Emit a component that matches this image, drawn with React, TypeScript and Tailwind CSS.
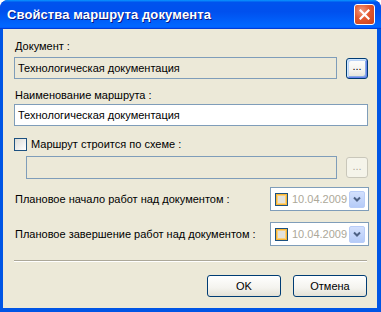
import type { FC } from "react";

const font = "font-['Tahoma','Liberation_Sans',sans-serif]";

const XpButton: FC<{ label: string; className?: string; disabled?: boolean; focused?: boolean }> = ({
	label,
	className,
	disabled,
	focused,
}) => {
	if (disabled) {
		return (
			<div
				className={`flex items-center justify-center rounded-[3px] border border-[#C9C7BA] bg-[#F5F4EA] text-[#ACA899] ${className}`}
			>
				{label}
			</div>
		);
	}
	return (
		<div
			className={`flex items-center justify-center rounded-[3px] border border-[#003C74] bg-[linear-gradient(to_bottom,#FFFFFF_0%,#F4F3EE_60%,#E3E1D6_100%)] text-black ${
				focused ? "shadow-[inset_1px_1px_0_#CEE7FF,inset_-1px_-1px_0_#6982EE,inset_2px_2px_0_#BCD4F6,inset_-2px_-2px_0_#89ADE4]" : ""
			} ${className}`}
		>
			{label}
		</div>
	);
};

const DatePicker: FC = () => (
	<div className="flex h-[24px] w-[99px] items-center border border-[#7F9DB9] bg-white pl-[4px] pr-[3px]">
		<div className="flex h-[13px] w-[13px] items-center justify-center border border-[#1C5180] bg-[#F8B636]">
			<div className="h-[9px] w-[9px] border border-[#FCD07A] bg-[#E3E2DC]" />
		</div>
		<span className="ml-[4px] text-[11px] leading-none text-[#ACA899]">10.04.2009</span>
		<div className="ml-auto flex h-[17px] w-[16px] items-center justify-center rounded-[2px] border border-[#B9CDF8] bg-[linear-gradient(to_bottom,#D3E0FD,#B5CBF8)]">
			<svg width="8" height="6" viewBox="0 0 8 6">
				<path d="M1 1.5 L4 4.5 L7 1.5" stroke="#4D6185" strokeWidth="2" fill="none" />
			</svg>
		</div>
	</div>
);

const App: FC = () => {
	return (
		<div className={`${font} h-[312px] w-[381px] bg-white text-[11px] text-black`}>
			<div className="flex h-full w-full flex-col overflow-hidden rounded-t-[8px] bg-[#0831D9]">
				<div className="flex h-[29px] shrink-0 items-center bg-[linear-gradient(180deg,#0997FF,#0053EE_8%,#0050EE_40%,#0066FF_88%,#0066FF_93%,#005BFF_95%,#003DD7_96%,#003DD7)] pl-[7px] pr-[6px]">
					<span className="font-['Trebuchet_MS','Liberation_Sans',sans-serif] text-[13px] font-bold tracking-[0.1px] text-white [text-shadow:1px_1px_#0A1883]">
						Свойства маршрута документа
					</span>
					<div className="ml-auto flex h-[21px] w-[21px] items-center justify-center rounded-[3px] border border-white bg-[radial-gradient(circle_at_35%_30%,#F29A7E_0%,#E2582F_45%,#C8401C_100%)]">
						<svg width="11" height="11" viewBox="0 0 11 11">
							<path d="M1.5 1.5 L9.5 9.5 M9.5 1.5 L1.5 9.5" stroke="white" strokeWidth="2.2" strokeLinecap="square" />
						</svg>
					</div>
				</div>
				<div className="flex flex-1 flex-col border-b-[4px] border-l-[3px] border-r-[4px] border-[#0055E5] bg-[#ECE9D8] pl-[11px] pt-[11px]">
					<div className="h-[13px] pl-px leading-[13px]">Документ :</div>
					<div className="mt-[4px] flex items-center">
						<div className="flex h-[22px] w-[323px] items-center border border-[#7F9DB9] bg-[#ECE9D8] pl-[3px]">
							Технологическая документация
						</div>
						<XpButton label="..." focused className="ml-[9px] h-[21px] w-[22px] pb-[3px]" />
					</div>
					<div className="mt-[10px] h-[13px] pl-px leading-[13px]">Наименование маршрута :</div>
					<div className="mt-[2px] flex h-[22px] w-[354px] items-center border border-[#7F9DB9] bg-white pl-[3px]">
						Технологическая документация
					</div>
					<div className="mt-[12px] flex h-[13px] items-center">
						<div className="h-[13px] w-[13px] border border-[#1C5180] bg-[linear-gradient(135deg,#DCDCD7,#FFFFFF)]" />
						<span className="ml-[4px] leading-[13px]">Маршрут строится по схеме :</span>
					</div>
					<div className="mt-[5px] flex items-center pl-[12px]">
						<div className="h-[23px] w-[311px] border border-[#7F9DB9] bg-[#ECE9D8]" />
						<XpButton label="..." disabled className="ml-[9px] h-[21px] w-[22px] pb-[3px]" />
					</div>
					<div className="mt-[8px] flex w-[355px] items-center justify-between">
						<span className="pl-px">Плановое начало работ над документом :</span>
						<DatePicker />
					</div>
					<div className="mt-[11px] flex w-[355px] items-center justify-between">
						<span className="pl-px">Плановое завершение работ над документом :</span>
						<DatePicker />
					</div>
					<div className="mt-[14px] w-[353px] border-b border-t border-b-white border-t-[#ACA899]" />
					<div className="mt-[13px] flex w-[354px] justify-end gap-[12px] pr-px">
						<XpButton label="OK" className="h-[22px] w-[74px]" />
						<XpButton label="Отмена" className="h-[22px] w-[74px]" />
					</div>
				</div>
			</div>
		</div>
	);
};

export default App;
